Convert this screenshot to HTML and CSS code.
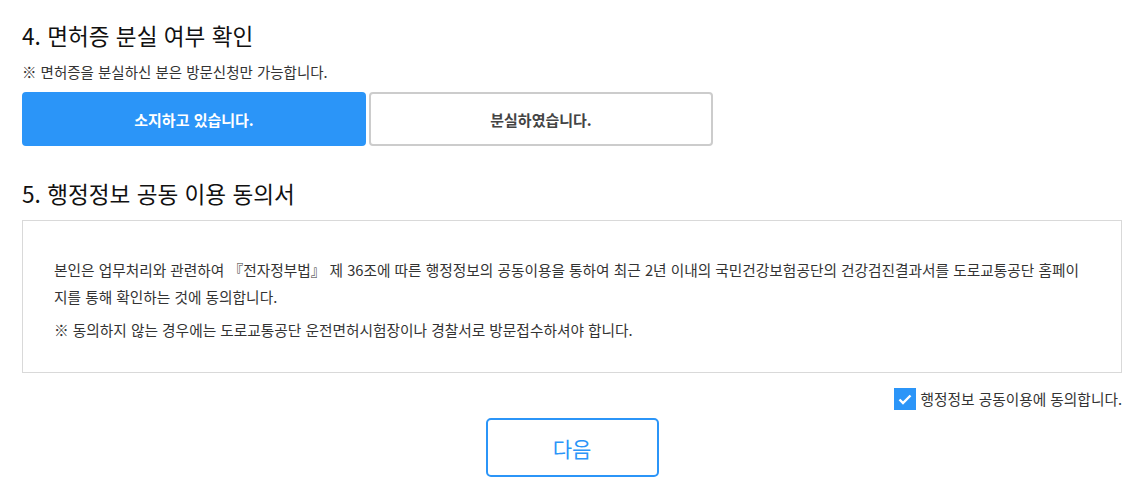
FILE: index.html
```html
<!DOCTYPE html>
<html lang="ko">
  <head>
    <meta charset="utf-8">
    <title>면허증 분실 여부 확인</title>
    <link rel="stylesheet" href="styles.css">
  </head>
  <body>
    <div class="wrap">
      <h2 class="sec-title">4. 면허증 분실 여부 확인</h2>
      <p class="note">※ 면허증을 분실하신 분은 방문신청만 가능합니다.</p>
      <div class="choice">
        <button class="opt on">소지하고 있습니다.</button>
        <button class="opt">분실하였습니다.</button>
      </div>

      <h2 class="sec-title sec-5">5. 행정정보 공동 이용 동의서</h2>
      <div class="agree-box">
        <p>본인은 업무처리와 관련하여 『전자정부법』 제 36조에 따른 행정정보의 공동이용을 통하여 최근 2년 이내의 국민건강보험공단의 건강검진결과서를 도로교통공단 홈페이지를 통해 확인하는 것에 동의합니다.</p>
        <p>※ 동의하지 않는 경우에는 도로교통공단 운전면허시험장이나 경찰서로 방문접수하셔야 합니다.</p>
      </div>
      <label class="check">
        <span class="box">
          <svg width="14" height="11" viewBox="0 0 14 11"><path d="M1.5 5.5l3.5 3.5 7.5-7.5" fill="none" stroke="#fff" stroke-width="2.4"/></svg>
        </span>
        행정정보 공동이용에 동의합니다.
      </label>
      <div class="actions">
        <button class="next">다음</button>
      </div>
    </div>
  </body>
</html>
```

FILE: styles.css
```css
* { box-sizing: border-box; }
body {
  margin: 0;
  font-family: "Noto Sans CJK KR", "Noto Sans", sans-serif;
  color: #222;
  background: #fff;
}
.wrap {
  width: 1100px;
  margin-left: 22px;
  padding-top: 20px;
}
.sec-title {
  margin: 0;
  font-size: 22.6px;
  font-weight: 400;
  line-height: 32px;
  color: #111;
}
.note {
  margin: 10px 0 0;
  font-size: 14.5px;
  line-height: 20px;
  color: #333;
}
.choice {
  display: flex;
  gap: 3px;
  margin-top: 10px;
}
.opt {
  width: 344px;
  height: 54px;
  border: 2px solid #ccc;
  border-radius: 4px;
  background: #fff;
  font-family: inherit;
  font-size: 15px;
  font-weight: 700;
  color: #444;
}
.opt.on {
  border-color: #2b95f8;
  background: #2b95f8;
  color: #fff;
}
.sec-5 {
  margin-top: 32px;
}
.agree-box {
  margin-top: 10px;
  border: 1px solid #d9d9d9;
  padding: 35px 31px 29px;
  font-size: 14.7px;
  line-height: 27px;
  color: #333;
}
.agree-box p {
  margin: 0;
}
.agree-box p + p {
  margin-top: 6px;
}
.check {
  display: flex;
  justify-content: flex-end;
  align-items: center;
  gap: 5px;
  margin-top: 15px;
  font-size: 14.7px;
  line-height: 22px;
  color: #333;
}
.box {
  display: flex;
  align-items: center;
  justify-content: center;
  width: 22px;
  height: 22px;
  background: #2b95f8;
}
.actions {
  display: flex;
  justify-content: center;
  margin-top: 8px;
}
.next {
  width: 173px;
  height: 59px;
  border: 2px solid #2b95f8;
  border-radius: 5px;
  background: #fff;
  font-family: inherit;
  font-size: 21px;
  color: #2b95f8;
}
```
